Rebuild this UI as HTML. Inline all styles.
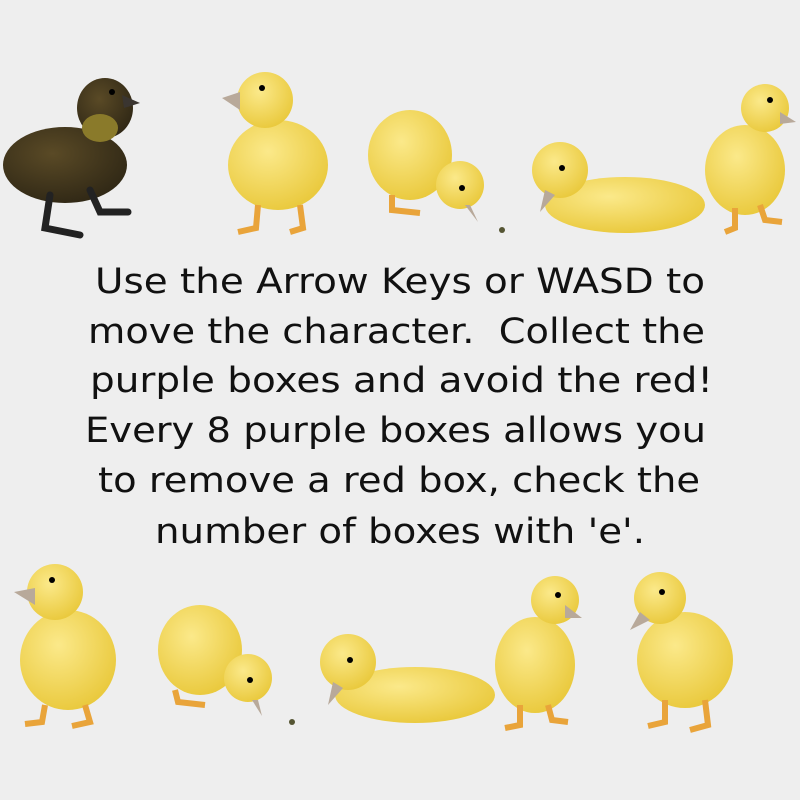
<!DOCTYPE html>
<html><head><meta charset="utf-8"><style>
html,body{margin:0;padding:0;background:#eeeeee;width:800px;height:800px;overflow:hidden}
svg{display:block}
</style></head><body>
<svg width="800" height="800" viewBox="0 0 800 800" xmlns="http://www.w3.org/2000/svg">
<rect width="800" height="800" fill="#eeeeee"/>
<defs>
<radialGradient id="y" cx="40%" cy="35%" r="70%"><stop offset="0" stop-color="#fbe98a"/><stop offset="1" stop-color="#e9c83a"/></radialGradient>
<radialGradient id="b" cx="40%" cy="35%" r="70%"><stop offset="0" stop-color="#5a4a26"/><stop offset="1" stop-color="#2f2715"/></radialGradient>
</defs>
<g>
<ellipse cx="65" cy="165" rx="62" ry="38" fill="url(#b)"/>
<ellipse cx="105" cy="108" rx="28" ry="30" fill="url(#b)"/>
<ellipse cx="100" cy="128" rx="18" ry="14" fill="#8a7a2a"/>
<path d="M122 95 L140 103 L124 108 Z" fill="#3a3530"/>
<circle cx="112" cy="92" r="3" fill="#000"/>
<path d="M50 195 L45 228 L80 235 M90 190 L100 212 L128 212" stroke="#222" stroke-width="7" fill="none" stroke-linecap="round"/>
</g>
<g>
<ellipse cx="278" cy="165" rx="50" ry="45" fill="url(#y)"/>
<circle cx="265" cy="100" r="28" fill="url(#y)"/>
<path d="M240 92 L222 98 L240 110 Z" fill="#b8a99a"/>
<circle cx="262" cy="88" r="3" fill="#000"/>
<path d="M258 205 L256 228 L238 232 M300 205 L303 228 L290 232" stroke="#e9a43a" stroke-width="6" fill="none"/>
</g>
<g>
<ellipse cx="410" cy="155" rx="42" ry="45" fill="url(#y)"/>
<circle cx="460" cy="185" r="24" fill="url(#y)"/>
<path d="M465 205 L478 222 L470 205 Z" fill="#b8a99a"/>
<circle cx="462" cy="188" r="3" fill="#000"/>
<path d="M392 195 L392 210 L420 213" stroke="#e9a43a" stroke-width="6" fill="none"/>
<circle cx="502" cy="230" r="3" fill="#553"/>
</g>
<g>
<ellipse cx="625" cy="205" rx="80" ry="28" fill="url(#y)"/>
<circle cx="560" cy="170" r="28" fill="url(#y)"/>
<path d="M545 190 L540 212 L555 195 Z" fill="#b8a99a"/>
<circle cx="562" cy="168" r="3" fill="#000"/>
</g>
<g>
<ellipse cx="745" cy="170" rx="40" ry="45" fill="url(#y)"/>
<circle cx="765" cy="108" r="24" fill="url(#y)"/>
<path d="M780 112 L796 122 L780 124 Z" fill="#b8a99a"/>
<circle cx="770" cy="100" r="3" fill="#000"/>
<path d="M735 208 L735 228 L725 232 M760 205 L765 220 L782 222" stroke="#e9a43a" stroke-width="6" fill="none"/>
</g>

<g font-family="'DejaVu Sans', sans-serif" font-size="35" fill="#111">
<text x="95" y="293" textLength="610" lengthAdjust="spacingAndGlyphs">Use the Arrow Keys or WASD to</text>
<text x="88" y="343" textLength="617" lengthAdjust="spacingAndGlyphs" xml:space="preserve">move the character.  Collect the</text>
<text x="90" y="392" textLength="623" lengthAdjust="spacingAndGlyphs">purple boxes and avoid the red!</text>
<text x="85" y="442" textLength="621" lengthAdjust="spacingAndGlyphs">Every 8 purple boxes allows you</text>
<text x="98" y="492" textLength="602" lengthAdjust="spacingAndGlyphs">to remove a red box, check the</text>
<text x="155" y="543" textLength="490" lengthAdjust="spacingAndGlyphs">number of boxes with 'e'.</text>
</g>

<g>
<ellipse cx="68" cy="660" rx="48" ry="50" fill="url(#y)"/>
<circle cx="55" cy="592" r="28" fill="url(#y)"/>
<path d="M35 588 L14 592 L35 605 Z" fill="#b8a99a"/>
<circle cx="52" cy="580" r="3" fill="#000"/>
<path d="M45 705 L42 722 L25 724 M85 705 L90 722 L72 726" stroke="#e9a43a" stroke-width="6" fill="none"/>
</g>
<g>
<ellipse cx="200" cy="650" rx="42" ry="45" fill="url(#y)"/>
<circle cx="248" cy="678" r="24" fill="url(#y)"/>
<path d="M252 700 L262 716 L258 700 Z" fill="#b8a99a"/>
<circle cx="250" cy="680" r="3" fill="#000"/>
<path d="M175 690 L178 702 L205 705" stroke="#e9a43a" stroke-width="6" fill="none"/>
<circle cx="292" cy="722" r="3" fill="#553"/>
</g>
<g>
<ellipse cx="415" cy="695" rx="80" ry="28" fill="url(#y)"/>
<circle cx="348" cy="662" r="28" fill="url(#y)"/>
<path d="M333 682 L328 705 L343 688 Z" fill="#b8a99a"/>
<circle cx="350" cy="660" r="3" fill="#000"/>
</g>
<g>
<ellipse cx="535" cy="665" rx="40" ry="48" fill="url(#y)"/>
<circle cx="555" cy="600" r="24" fill="url(#y)"/>
<path d="M565 605 L582 618 L565 618 Z" fill="#b8a99a"/>
<circle cx="558" cy="595" r="3" fill="#000"/>
<path d="M520 705 L520 725 L505 728 M548 705 L552 720 L568 722" stroke="#e9a43a" stroke-width="6" fill="none"/>
</g>
<g>
<ellipse cx="685" cy="660" rx="48" ry="48" fill="url(#y)"/>
<circle cx="660" cy="598" r="26" fill="url(#y)"/>
<path d="M640 612 L630 630 L650 620 Z" fill="#b8a99a"/>
<circle cx="662" cy="592" r="3" fill="#000"/>
<path d="M665 700 L665 722 L648 726 M705 700 L708 725 L690 730" stroke="#e9a43a" stroke-width="6" fill="none"/>
</g>
</svg>
</body></html>
